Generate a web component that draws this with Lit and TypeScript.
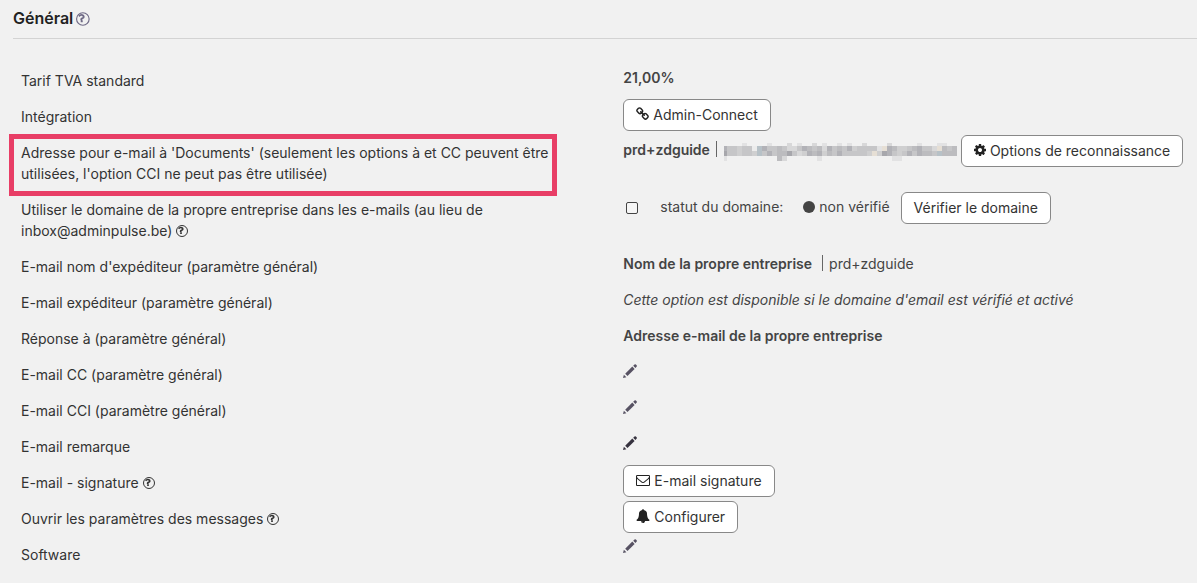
import { LitElement, html, svg, css, nothing } from "lit";
import { customElement, property } from "lit/decorators.js";

const GLYPHS: Record<string, { box: string; width: number; path: string }> = {
  help: {
    box: "128 0 1536 1792",
    width: 12,
    path: "M880 1072v160q0 14-9 23t-23 9h-160q-14 0-23-9t-9-23v-160q0-14 9-23t23-9h160q14 0 23 9t9 23zm216-432q0 50-15 90t-45.5 69-52 44-59.5 36q-32 18-46.5 28t-26 24-11.5 29v32q0 14-9 23t-23 9h-160q-14 0-23-9t-9-23v-68q0-35 10.5-64.5t24-47.5 39-35.5 41-25.5 44.5-21q53-25 75-43t22-49q0-42-43.5-71.5t-95.5-29.5q-56 0-95 27-29 20-80 83-9 12-25 12-11 0-19-6l-108-82q-10-7-12-20t5-23q122-192 349-192 129 0 238.5 89.5t109.5 214.5z",
  },
  chain: {
    box: "64 0 1664 1792",
    width: 13,
    path: "M1520 1216q0-40-28-68l-208-208q-28-28-68-28-42 0-72 32 3 3 19 18.5t21.5 21.5 15 19 13 25.5 3.5 27.5q0 40-28 68t-68 28q-15 0-27.5-3.5t-25.5-13-19-15-21.5-21.5-18.5-19q-33 31-33 73 0 40 28 68l206 207q27 27 68 27 40 0 68-26l147-146q28-28 28-67zm-703-705q0-40-28-68l-206-207q-28-28-68-28-39 0-68 27l-147 146q-28 28-28 67 0 40 28 68l208 208q27 27 68 27 42 0 72-31-3-3-19-18.5t-21.5-21.5-15-19-13-25.5-3.5-27.5q0-40 28-68t68-28q15 0 27.5 3.5t25.5 13 19 15 21.5 21.5 18.5 19q33-31 33-73zm895 705q0 120-85 203l-147 146q-83 83-203 83-121 0-204-85l-206-207q-83-83-83-203 0-123 88-209l-88-88q-86 88-208 88-120 0-204-84l-208-208q-84-84-84-204t85-203l147-146q83-83 203-83 121 0 204 85l206 207q83 83 83 203 0 123-88 209l88 88q86-88 208-88 120 0 204 84l208 208q84 84 84 204z",
  },
  cog: {
    box: "128 0 1536 1792",
    width: 12,
    path: "M1152 896q0-106-75-181t-181-75-181 75-75 181 75 181 181 75 181-75 75-181zm512-109v222q0 12-8 23t-20 13l-185 28q-19 54-39 91 35 50 107 138 10 12 10 25t-9 23q-27 37-99 108t-94 71q-12 0-26-9l-138-108q-44 23-91 38-16 136-29 186-7 28-36 28h-222q-14 0-24.5-8.5t-11.5-21.5l-28-184q-49-16-90-37l-141 107q-10 9-25 9-14 0-25-11-126-114-165-168-7-10-7-23 0-12 8-23 15-21 51-66.5t54-70.5q-27-50-41-99l-183-27q-13-2-21-12.5t-8-23.5v-222q0-12 8-23t19-13l186-28q14-46 39-92-40-57-107-138-10-12-10-24 0-10 9-23 26-36 98.5-107.5t94.5-71.5q13 0 26 10l138 107q44-23 91-38 16-136 29-186 7-28 36-28h222q14 0 24.5 8.5t11.5 21.5l28 184q49 16 90 37l142-107q9-9 24-9 13 0 25 10 129 119 165 170 7 8 7 22 0 12-8 23-15 21-51 66.5t-54 70.5q26 50 41 98l183 28q13 2 21 12.5t8 23.5z",
  },
  envelope: {
    box: "0 0 1792 1792",
    width: 14,
    path: "M1664 1504v-768q-32 36-69 66-268 206-426 338-51 43-83 67t-86.5 48.5-102.5 24.5h-2q-48 0-102.5-24.5t-86.5-48.5-83-67q-158-132-426-338-37-30-69-66v768q0 13 9.5 22.5t22.5 9.5h1472q13 0 22.5-9.5t9.5-22.5zm0-1051v-24.5l-.5-13-3-12.5-5.5-9-9-7.5-14-2.5h-1472q-13 0-22.5 9.5t-9.5 22.5q0 168 147 284 193 152 401 317 6 5 35 29.5t46 37.5 44.5 31.5 50.5 27.5 43 9h2q20 0 43-9t50.5-27.5 44.5-31.5 46-37.5 35-29.5q208-165 401-317 54-43 100.5-115.5t46.5-131.5zm128-37v1088q0 66-47 113t-113 47h-1472q-66 0-113-47t-47-113v-1088q0-66 47-113t113-47h1472q66 0 113 47t47 113z",
  },
  bell: {
    box: "0 0 1792 1792",
    width: 14,
    path: "M912 1696q0-16-16-16-59 0-101.5-42.5t-42.5-101.5q0-16-16-16t-16 16q0 73 51.5 124.5t124.5 51.5q16 0 16-16zm816-288q0 52-38 90t-90 38h-448q0 106-75 181t-181 75-181-75-75-181h-448q-52 0-90-38t-38-90q50-42 91-88t85-119.5 74.5-158.5 50-206 19.5-260q0-152 117-282.5t307-158.5q-8-19-8-39 0-40 28-68t68-28 68 28 28 68q0 20-8 39 190 28 307 158.5t117 282.5q0 139 19.5 260t50 206 74.5 158.5 85 119.5 91 88z",
  },
};

@customElement("ui-icon")
class UiIcon extends LitElement {
  @property() name = "help";
  @property({ type: Number }) size = 14;

  static styles = css`
    :host { display: inline-block; line-height: 0; vertical-align: -2px; }
    .glyph { display: block; fill: currentColor; }
    .ring { fill: none; stroke: currentColor; stroke-width: 128; }
  `;

  render() {
    const g = GLYPHS[this.name];
    return html`<svg class="glyph" aria-hidden="true" viewBox=${g.box}
      width=${(g.width * this.size) / 14} height=${this.size}>
      <path d=${g.path} fill-rule="evenodd"></path>
      ${this.name === "help" ? svg`<circle class="ring" cx="896" cy="896" r="704"></circle>` : nothing}
    </svg>`;
  }
}

@customElement("edit-button")
class EditButton extends LitElement {
  @property() label = "";

  static styles = css`
    :host { display: inline-block; color: #575263; }
    :host([strong]) { color: #36323f; }
    .edit { display: block; padding: 0; border: 0; background: none; color: inherit; cursor: pointer; }
    .pencil { display: block; fill: currentColor; }
  `;

  render() {
    return html`<button class="edit" type="button" aria-label=${this.label}>
      <svg class="pencil" width="14" height="14" viewBox="0 0 14 14" aria-hidden="true">
        <path d="M0 14 .9 10.700 3.400 13.200z"></path>
        <path d="M2.200 9.700 9.300 2.600 11.600 4.900 4.500 12z"></path>
        <path d="M10.200 1.800 11.500.5Q12.200-.1 12.900.5L13.600 1.200Q14.300 2 13.700 2.600L12.400 4z"></path>
      </svg>
    </button>`;
  }
}

/* Mosaic of the masked address: each digit is a shade, "." leaves the cell empty. */
const SHADES = ["#ececec", "#e2e2e3", "#d8d8d9", "#cfcfd0", "#c6c6c8", "#bcbcbf", "#b2b2b7", "#a7a7ac", "#e6dfd5", "#b7c1c7"];
const MOSAIC = [
  "....1....1...2.1..2.1..1.1..2....2.....1...11..",
  "64434409644542246545264546344441865334564428545",
  "74434439464557423656354644444383764346465549555",
  "1..........52......1..............11...........",
];

@customElement("masked-address")
class MaskedAddress extends LitElement {
  static styles = css`
    :host { display: block; }
    .mosaic { display: block; }
  `;

  render() {
    const tops = [0, 3, 8, 13];
    const heights = [3, 5, 5, 5];
    return html`<svg class="mosaic" width="233" height="24" viewBox="0 -6 233 24" aria-hidden="true"
      shape-rendering="crispEdges">
      ${MOSAIC.map((row, r) => [...row].map((c, i) => {
        if (c === ".") return nothing;
        const x = i === 0 ? 0 : 3 + (i - 1) * 5;
        return svg`<rect x=${x} y=${tops[r]} width=${i === 0 ? 3 : 5} height=${heights[r]}
          fill=${SHADES[Number(c)]}></rect>`;
      }))}
    </svg>`;
  }
}

@customElement("app-root")
class AppRoot extends LitElement {
  static styles = css`
    :host {
      display: block;
      min-height: 100vh;
      box-sizing: border-box;
      background: #f1f1f1;
      color: #444;
      font: 14px/21px Inter, "Open Sans", sans-serif;
    }
    .head {
      display: flex;
      align-items: center;
      gap: 3px;
      margin-left: 13px;
      padding: 8px 0 9px;
      border-bottom: 1px solid #d3d3d3;
    }
    .title { margin: 0; color: #222; font-size: 16px; line-height: 21px; font-weight: 600; }
    .head-help { color: #6f6a86; }
    .rows { padding: 24px 0 0 21px; }
    .row {
      display: grid;
      grid-template-columns: minmax(0, 105fr) minmax(0, 100fr);
      min-height: 36px;
    }
    .label { position: relative; padding: 7px 48px 8px 0; color: #333; }
    .wide { padding-right: 64px; }
    .marked::after {
      content: "";
      position: absolute;
      inset: -1px 66px -4px -12px;
      border: 5px solid #e83e66;
      pointer-events: none;
    }
    .value { display: flex; align-items: center; height: 28px; white-space: nowrap; }
    .compact { height: 18px; }
    .bold { font-weight: 600; }
    .bar { width: 1px; height: 16px; margin: 0 6px; background: #666; }
    .bar-spaced { margin-left: 10px; }
    .btn {
      display: inline-flex;
      align-items: center;
      align-self: flex-start;
      gap: 4px;
      box-sizing: border-box;
      height: 32px;
      padding: 0 12px 2px;
      border: 1px solid #888;
      border-radius: 6px;
      background: #fff;
      color: #333;
      font: inherit;
      cursor: pointer;
    }
    .btn ui-icon { color: #222; }
    .mask { margin-left: 1px; }
    .after-mask { margin-left: 4px; }
    .check {
      appearance: none;
      width: 12px;
      height: 12px;
      margin: 4px 22px 0 3px;
      border: 1px solid #444;
      border-radius: 2px;
      background: #f6f6f6;
    }
    .dot { width: 12px; height: 12px; margin: 2px 4px 0 20px; border-radius: 50%; background: #444; }
    .after-status { margin-left: 11px; }
    .note { font-style: italic; }
  `;

  row(label: unknown, value: unknown, labelClass = "", valueClass = "") {
    return html`<div class="row">
      <div class="label ${labelClass}">${label}</div>
      <div class="value ${valueClass}">${value}</div>
    </div>`;
  }

  render() {
    const help = html`<ui-icon name="help"></ui-icon>`;
    return html`
      <header class="head">
        <h1 class="title">Général</h1>
        <ui-icon class="head-help" name="help" size="16"></ui-icon>
      </header>
      <main class="rows">
        ${this.row("Tarif TVA standard", html`<span class="bold">21,00%</span>`)}
        ${this.row("Intégration", html`<button class="btn" type="button"><ui-icon name="chain"></ui-icon>Admin-Connect</button>`)}
        ${this.row(
          "Adresse pour e-mail à 'Documents' (seulement les options à et CC peuvent être utilisées, l'option CCI ne peut pas être utilisée)",
          html`<span class="bold">prd+zdguide</span><span class="bar"></span><masked-address class="mask"></masked-address>
            <button class="btn after-mask" type="button"><ui-icon name="cog"></ui-icon>Options de reconnaissance</button>`,
          "marked",
        )}
        ${this.row(
          html`<label for="own-domain">Utiliser le domaine de la propre entreprise dans les e-mails (au lieu de inbox@adminpulse.be)</label> ${help}`,
          html`<input class="check" id="own-domain" type="checkbox"><span>statut du domaine:</span><span class="dot"></span><span>non vérifié</span>
            <button class="btn after-status" type="button">Vérifier le domaine</button>`,
          "wide",
        )}
        ${this.row("E-mail nom d'expéditeur (paramètre général)", html`<span class="bold">Nom de la propre entreprise</span><span class="bar bar-spaced"></span><span>prd+zdguide</span>`)}
        ${this.row("E-mail expéditeur (paramètre général)", html`<span class="note">Cette option est disponible si le domaine d'email est vérifié et activé</span>`)}
        ${this.row("Réponse à (paramètre général)", html`<span class="bold">Adresse e-mail de la propre entreprise</span>`)}
        ${this.row("E-mail CC (paramètre général)", html`<edit-button label="E-mail CC"></edit-button>`)}
        ${this.row("E-mail CCI (paramètre général)", html`<edit-button label="E-mail CCI"></edit-button>`)}
        ${this.row("E-mail remarque", html`<edit-button strong label="E-mail remarque"></edit-button>`)}
        ${this.row(html`E-mail - signature ${help}`, html`<button class="btn" type="button"><ui-icon name="envelope"></ui-icon>E-mail signature</button>`)}
        ${this.row(html`Ouvrir les paramètres des messages ${help}`, html`<button class="btn" type="button"><ui-icon name="bell"></ui-icon>Configurer</button>`)}
        ${this.row("Software", html`<edit-button label="Software"></edit-button>`, "", "compact")}
      </main>
    `;
  }
}
